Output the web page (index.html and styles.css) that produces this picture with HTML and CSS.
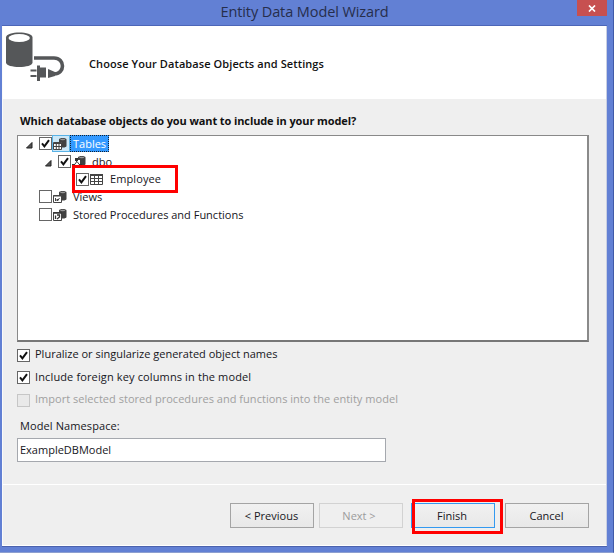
FILE: index.html
```html
<!DOCTYPE html>
<html lang="en">
<head>
<meta charset="utf-8">
<title>Entity Data Model Wizard</title>
<link rel="stylesheet" href="styles.css">
</head>
<body>
<svg width="0" height="0" class="defs">
  <symbol id="check" viewBox="0 0 13 13"><path d="M3 6.3 5.4 9.3 10 3.2" fill="none" stroke="#111" stroke-width="2"/></symbol>
  <symbol id="arrow" viewBox="0 0 7 7"><path d="M6 .5V6H.5z" fill="#555" stroke="#222" stroke-width="1"/></symbol>
  <symbol id="cylinder" viewBox="0 0 16 14"><path d="M7 2.5C7 .5 14.500 .5 14.500 2.500V9c0 1.500-4 2-5.500 1V5H7z" fill="#414141"/><ellipse cx="10.700" cy="2.500" rx="2.600" ry=".7" fill="#999"/></symbol>
</svg>
<div class="window">
  <header class="titlebar">
    <h1 class="title">Entity Data Model Wizard</h1>
    <button class="close" aria-label="Close"><svg width="8" height="7" viewBox="0 0 8 7"><path d="M1 .5 7 6.500M7 .5 1 6.500" stroke="#fff" stroke-width="1.700"/></svg></button>
  </header>
  <main class="client">
    <section class="banner">
      <svg class="logo" width="62" height="52" viewBox="0 0 62 52">
        <path d="M3 7.500C3 .8 29.500 .8 29.500 7.500V32.500C29.500 38.500 3 38.500 3 32.500z" fill="#555759"/>
        <ellipse cx="16.200" cy="8" rx="10.700" ry="4" fill="#fff"/>
        <path d="M31 28H51C62.300 28 62.300 44 51 44H48" fill="none" stroke="#555759" stroke-width="3.600"/>
        <path d="M45 39 52 42V46L45 48zM34 35.500H37V37.500H43V47.500H37V51H34zM27.500 39.500H33.500V41.500H27.500zM27.500 45H33.500V47H27.500z" fill="#555759"/>
      </svg>
      <h2 class="heading">Choose Your Database Objects and Settings</h2>
    </section>
    <section class="body">
      <p class="question">Which database objects do you want to include in your model?</p>
      <div class="tree">
        <div class="row">
          <svg class="arrow"><use href="#arrow"/></svg>
          <span class="box"><svg><use href="#check"/></svg></span>
          <span class="icon hot"><svg width="16" height="14" viewBox="0 0 16 14"><use href="#cylinder"/><path d="M1.500 5.500h8v7h-8z" fill="#fff" stroke="#444"/><path d="M1 6.500h9M1 9.500h9M4.300 6v7M7 6v7" stroke="#444"/></svg></span>
          <span class="label selected">Tables</span>
        </div>
        <div class="row level-2">
          <svg class="arrow"><use href="#arrow"/></svg>
          <span class="box"><svg><use href="#check"/></svg></span>
          <span class="icon"><svg width="16" height="14" viewBox="0 0 16 14"><use href="#cylinder"/><path d="M5.500 3v4L2.500 11h7L6 6.500" fill="none" stroke="#444"/><path d="M1 9h3v3H1zM8 9h3v3H8zM4 3h3v3H4z" fill="#333"/></svg></span>
          <span class="label">dbo</span>
        </div>
        <div class="row level-3">
          <span class="box"><svg><use href="#check"/></svg></span>
          <span class="icon"><svg width="16" height="14" viewBox="0 0 16 14"><path d="M1.500 2.500h12v10h-12z" fill="#fff" stroke="#444"/><path d="M1 3h13" stroke="#444" stroke-width="2"/><path d="M1 6.500h13M1 9.500h13M5.500 3v10M9.500 3v10" stroke="#444"/></svg></span>
          <span class="label employee">Employee</span>
          <span class="callout callout-row"></span>
        </div>
        <div class="row leaf">
          <span class="box"></span>
          <span class="icon"><svg width="16" height="14" viewBox="0 0 16 14"><use href="#cylinder"/><path d="M1.500 5.500h8v7h-8z" fill="#fff" stroke="#444"/><path d="M1 6h9M3.500 8v3l2-2v2l2-3" fill="none" stroke="#444"/></svg></span>
          <span class="label">Views</span>
        </div>
        <div class="row leaf">
          <span class="box"></span>
          <span class="icon"><svg width="16" height="14" viewBox="0 0 16 14"><use href="#cylinder"/><path d="M1.500 4.500h8v8h-8z" fill="#fff" stroke="#444"/><path d="M1 5h9M3.500 7.500v3.500M5 7h2.500v2L5 11" fill="none" stroke="#333" stroke-width="1.300"/></svg></span>
          <span class="label">Stored Procedures and Functions</span>
        </div>
      </div>
      <div class="options">
        <label class="option"><span class="box"><svg><use href="#check"/></svg></span><span>Pluralize or singularize generated object names</span></label>
        <label class="option"><span class="box"><svg><use href="#check"/></svg></span><span class="include">Include foreign key columns in the model</span></label>
        <label class="option disabled"><span class="box"></span><span>Import selected stored procedures and functions into the entity model</span></label>
      </div>
      <p class="field-label">Model Namespace:</p>
      <div class="field"><span>ExampleDBModel</span></div>
    </section>
    <footer class="actions">
      <button class="btn">&lt; Previous</button>
      <button class="btn off">Next &gt;</button>
      <button class="btn primary">Finish<span class="callout callout-finish"></span></button>
      <button class="btn">Cancel</button>
    </footer>
  </main>
</div>
</body>
</html>
```
FILE: styles.css
```css
* { box-sizing: border-box; }
body { margin: 0; overflow: hidden; font: 11px/16px "Open Sans", "Noto Sans", sans-serif; color: #16161c; }
h1, h2, p { margin: 0; }
button { font: inherit; padding: 0; }
.defs { position: absolute; }
.window { width: 614px; height: 553px; background: #6280d4; border-right: 1px solid #405aa8; border-bottom: 1px solid #8d9fd0; padding: 0 6px 6px 2px; display: flex; flex-direction: column; }
.titlebar { height: 26px; flex: none; display: flex; justify-content: center; position: relative; border-bottom: 1px solid #4c66b8; }
.title { font-size: 14.500px; font-weight: 400; line-height: 23px; color: #262e4c; white-space: nowrap; letter-spacing: -.1px; }
.close { position: absolute; right: 0; top: 0; width: 30px; height: 16px; background: #c75050; border: 0; display: flex; align-items: center; justify-content: center; }
.client { flex: 1; background: #efefef; border-right: 1px solid #c9cfe2; border-left: 1px solid #fafafa; border-bottom: 1px solid #fff; box-shadow: 0 1px #4b62ae; display: flex; flex-direction: column; min-height: 0; }
.banner { height: 73px; background: #fff; display: flex; flex: none; }
.logo { margin: 4px 0 0 0; }
.heading { font-size: 11px; font-weight: 600; line-height: 16px; margin: 30px 0 0 24px; white-space: nowrap; color: #111; letter-spacing: .09px; }
.body { flex: 1; padding: 14px 17px 0 14px; }
.question { font-weight: 700; padding-left: 3px; white-space: nowrap; color: #111; letter-spacing: -.105px; }
.tree { margin-top: 6px; height: 207px; background: #fff; border: 1px solid #898989; border-right: 2px solid #8a8a8a; border-bottom: 2px solid #777; padding-left: 7px; }
.row { display: flex; align-items: center; height: 17.700px; position: relative; top: -1px; white-space: nowrap; }
.level-2 { padding-left: 19px; }
.level-3 { padding-left: 51px; }
.leaf { padding-left: 14px; }
.arrow { width: 7px; height: 7px; margin: 3px 6px 0 1px; flex: none; }
.box { width: 13px; height: 13px; border: 1px solid #666; background: #fff; flex: none; display: block; }
.box svg { display: block; width: 13px; height: 13px; margin: -1px; }
.icon { width: 18px; height: 17px; display: flex; align-items: center; justify-content: center; flex: none; padding-right: 2px; }
.hot { background: #cce8f8; outline: 1px solid #59b2e6; outline-offset: -1px; }
.label { padding-left: 3px; line-height: 17px; margin-bottom: 1px; }
.employee { letter-spacing: .1px; }
.selected { background: #3399ff; color: #fff; outline: 1px dotted #123; outline-offset: -1px; width: 39px; height: 17px; margin-bottom: 0; }
.callout { position: absolute; border: 3px solid #f00; pointer-events: none; }
.callout-row { left: 47px; top: -5px; width: 106px; height: 28px; }
.options { padding-top: 2px; }
.option { display: flex; align-items: center; height: 22.500px; gap: 5px; white-space: nowrap; font-weight: 500; }
.options span + span { position: relative; top: -1px; }
.include { letter-spacing: .13px; }
.disabled { color: #a0a0a0; font-weight: 400; letter-spacing: .03px; }
.disabled .box { border-color: #c6c6c6; background: #e9e9e9; }
.field-label { padding-left: 3px; margin-top: 6px; letter-spacing: .1px; }
.field { width: 369px; height: 24px; margin-top: 4px; background: #fff; border: 1px solid #a5a8ae; padding: 2px; line-height: 17px; }
.actions { height: 61px; flex: none; border-top: 1px solid #fff; padding: 18px 17px 0 0; display: flex; justify-content: flex-end; gap: 5px; }
.btn { width: 84px; height: 25px; border: 1px solid #a4a4a4; background: linear-gradient(#f1f1f1, #e8e8e8); color: #16161c; position: relative; padding-right: 1px; }
.off { border-color: #d2d2d2; color: #9c9c9c; background: #efefef; padding-right: 4px; }
.primary { border-color: #3399f0; margin: 0 5px 0 3px; padding-right: 2px; }
.callout-finish { left: 0; top: -5px; width: 91px; height: 35px; }
```
